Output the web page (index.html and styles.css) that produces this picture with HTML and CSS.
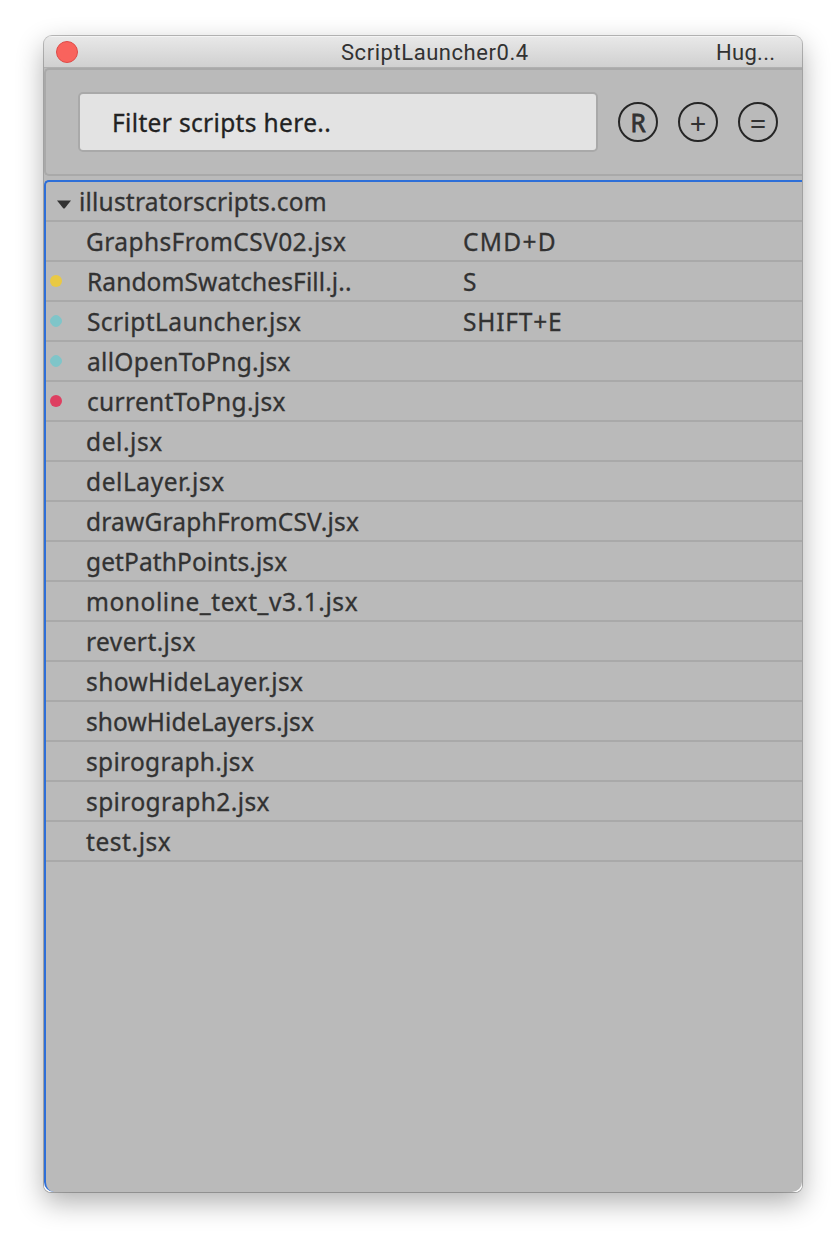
FILE: index.html
```html
<!DOCTYPE html>
<html lang="en">
<head>
<meta charset="utf-8">
<title>ScriptLauncher0.4</title>
<link rel="stylesheet" href="styles.css">
</head>
<body>
<main class="window">
  <header class="titlebar"><span class="close"></span><h1 class="title">ScriptLauncher0.4</h1><span class="owner">Hug...</span></header>
  <section class="toolbar">
    <div class="filter">Filter scripts here..</div>
    <button class="round letter">R</button>
    <button class="round sign">+</button>
    <button class="round sign">=</button>
  </section>
  <section class="list">
    <div class="row"><svg class="arrow" viewBox="0 0 14 9"><path d="M0 0.5H14L8 8Q7 9 6 8Z"/></svg><span class="snug">illustratorscripts.com</span></div>
    <div class="row"><span class="mark"></span><span class="name">GraphsFromCSV02.jsx</span><span class="wider">CMD+D</span></div>
    <div class="row marked"><span class="mark yellow"></span><span class="name tight">RandomSwatchesFill.j..</span><span class="key">S</span></div>
    <div class="row marked"><span class="mark teal"></span><span class="name">ScriptLauncher.jsx</span><span class="wide">SHIFT+E</span></div>
    <div class="row marked"><span class="mark teal"></span><span class="name medium">allOpenToPng.jsx</span></div>
    <div class="row marked"><span class="mark red"></span><span class="name medium">currentToPng.jsx</span></div>
    <div class="row"><span class="mark"></span><span class="name loose">del.jsx</span></div>
    <div class="row"><span class="mark"></span><span class="name loose">delLayer.jsx</span></div>
    <div class="row"><span class="mark"></span><span class="name snug">drawGraphFromCSV.jsx</span></div>
    <div class="row"><span class="mark"></span><span class="name tight">getPathPoints.jsx</span></div>
    <div class="row"><span class="mark"></span><span class="name loose">monoline_text_v3.1.jsx</span></div>
    <div class="row"><span class="mark"></span><span class="name">revert.jsx</span></div>
    <div class="row"><span class="mark"></span><span class="name">showHideLayer.jsx</span></div>
    <div class="row"><span class="mark"></span><span class="name tight">showHideLayers.jsx</span></div>
    <div class="row"><span class="mark"></span><span class="name medium">spirograph.jsx</span></div>
    <div class="row"><span class="mark"></span><span class="name">spirograph2.jsx</span></div>
    <div class="row"><span class="mark"></span><span class="name loose">test.jsx</span></div>
  </section>
</main>
</body>
</html>
```
FILE: styles.css
```css
* { box-sizing: border-box; }
body { margin: 0; padding: 36px 38px 44px 44px; background: #fff; }
.window {
  height: 1156px; display: flex; flex-direction: column; overflow: hidden;
  background: linear-gradient(#bababa 90%, #fff 90%); border-radius: 8px 8px 7px 7px;
  box-shadow: 0 0 0 1px rgba(0,0,0,.25), 0 10px 28px rgba(0,0,0,.32);
  font-family: "Noto Sans", sans-serif; font-size: 24.5px; letter-spacing: .41px; color: #323232;
  -webkit-text-stroke: .3px;
}
.titlebar {
  flex: none; height: 32px; display: grid; grid-template-columns: 34px 1fr 86px; align-items: center;
  background: linear-gradient(#e8e8e8, #d0d0d0); border-bottom: 1px solid #b0b0b0; border-top: 1px solid #f4f4f4;
  font: 22px Roboto, sans-serif; letter-spacing: .55px;
  -webkit-text-stroke: 0;
}
.close { width: 22px; height: 22px; margin-left: 12px; border-radius: 50%; background: #f9635d; border: 1px solid #dd4c48; }
.title { margin: 0 0 0 263px; font: inherit; }
.owner { letter-spacing: .3px; }
.toolbar {
  flex: none; height: 108px; display: flex; align-items: center; padding-left: 32px;
  border: 2px solid #a9a9a9; border-right: 0; border-radius: 5px 0 0 5px;
}
.filter {
  width: 520px; height: 60px; margin-right: 20px; padding-left: 32px; display: flex; align-items: center;
  letter-spacing: .34px;
  border: 2px solid #a9a9a9; border-radius: 5px; background: #e3e3e3; color: #222;
}
.round {
  width: 40px; height: 40px; margin-right: 20px; padding: 0; border: 2px solid #262626; border-radius: 50%;
  background: none; color: #323232;
}
.letter { font: 24.5px/37px "Noto Sans", sans-serif; -webkit-text-stroke: .8px; }
.sign { padding-top: 2px; font: 29px/34px "Noto Sans", sans-serif; -webkit-text-stroke: 0; }
.list { flex: 1; margin-top: 4px; background: #bababa; border: 2px solid #2e6fd8; border-width: 2px 0 0 2px; border-radius: 5px 0 10px 10px; }
.row { height: 40px; display: flex; align-items: center; border-bottom: 2px solid #a9a9a9; white-space: pre; }
.arrow { width: 14px; height: 9px; margin: 6px 8px 0 11px; fill: #323232; }
.mark { width: 12px; height: 12px; margin: 0 24px 0 4px; border-radius: 50%; }
.marked .mark { margin-right: 25px; }
.marked .name { width: 376px; }
.yellow { background: #e9c944; }
.teal { background: #7fc5c9; clip-path: polygon(33% 0, 67% 0, 100% 33%, 100% 67%, 67% 100%, 33% 100%, 0 67%, 0 33%); }
.red { background: #de3f61; }
.name { width: 377px; }
.tight { letter-spacing: .1px; }
.snug { letter-spacing: .2px; }
.medium { letter-spacing: .31px; }
.loose { letter-spacing: .57px; }
.wide { letter-spacing: .8px; }
.wider { letter-spacing: 1.3px; }
```
